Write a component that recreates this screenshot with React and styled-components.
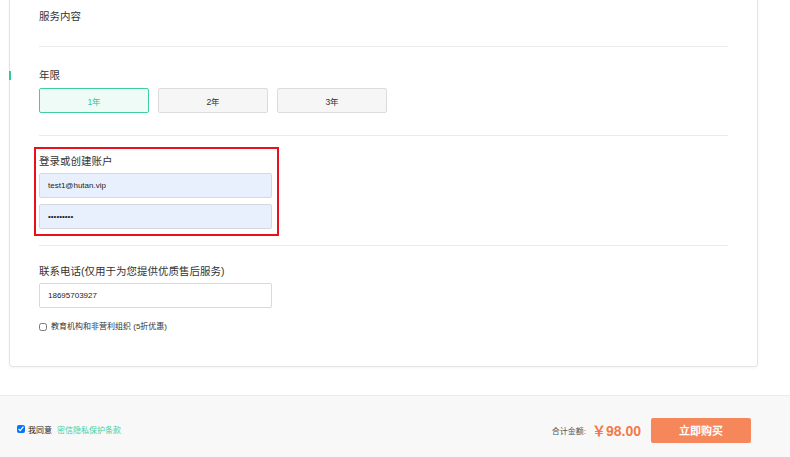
import React, { useState } from 'react'
import styled, { createGlobalStyle } from 'styled-components'

const GlobalStyle = createGlobalStyle`
  html, body {
    margin: 0;
    padding: 0;
    background: #fff;
  }
  body {
    font-family: "Liberation Sans", "Noto Sans CJK SC", sans-serif;
    color: #333;
    overflow: hidden;
  }
`

const years = ['1年', '2年', '3年']

function App() {
  const [year, setYear] = useState(0)
  const [agree, setAgree] = useState(true)
  const [edu, setEdu] = useState(false)

  return (
    <>
      <GlobalStyle />
      <Page>
        <Card>
          <Section pad="0 0 23px">
            <Label>服务内容</Label>
          </Section>

          <Section pad="21px 0 22px">
            <Label marked>年限</Label>
            <YearRow>
              {years.map((y, i) => (
                <YearButton key={y} active={i === year} onClick={() => setYear(i)}>
                  {y}
                </YearButton>
              ))}
            </YearRow>
          </Section>

          <Section pad="11px 0 9px">
            <Highlight>
              <Label>登录或创建账户</Label>
              <Input autofill space="5px" defaultValue="test1@hutan.vip" />
              <Input autofill space="6px" type="password" defaultValue="123456789" />
            </Highlight>
          </Section>

          <Section pad="18px 0 34px" last>
            <Label>联系电话(仅用于为您提供优质售后服务)</Label>
            <Input space="5px" defaultValue="18695703927" />
            <CheckRow>
              <Check type="checkbox" checked={edu} onChange={() => setEdu(!edu)} />
              教育机构和非营利组织 (5折优惠)
            </CheckRow>
          </Section>
        </Card>
      </Page>

      <Footer>
        <Agree>
          <Check type="checkbox" checked={agree} onChange={() => setAgree(!agree)} />
          我同意
          <Link>密信隐私保护条款</Link>
        </Agree>
        <Total>
          合计金额:
          <Price>￥98.00</Price>
          <BuyButton>立即购买</BuyButton>
        </Total>
      </Footer>
    </>
  )
}

export default App

const Page = styled.div`
  padding: 0 32px 0 9px;
`

const Card = styled.div`
  background: #fff;
  border: 1px solid #e4e4e4;
  border-top: none;
  border-radius: 0 0 4px 4px;
  box-shadow: 0 1px 3px rgba(0, 0, 0, 0.05);
  padding: 9px 29px 0 29px;
`

const Section = styled.div`
  display: flex;
  flex-direction: column;
  align-items: flex-start;
  padding: ${p => p.pad};
  border-bottom: ${p => (p.last ? 'none' : '1px solid #ebebeb')};
`

const Label = styled.div`
  position: relative;
  font-size: 10.5px;
  line-height: 14px;
  color: #333;

  &::before {
    content: '';
    display: ${p => (p.marked ? 'block' : 'none')};
    position: absolute;
    left: -30px;
    top: 3px;
    width: 2px;
    height: 9px;
    background: #2ecb97;
  }
`

const YearRow = styled.div`
  display: flex;
  gap: 9px;
  margin-top: 6px;
`

const YearButton = styled.button`
  width: 110px;
  height: 25px;
  padding: 0;
  border: 1px solid ${p => (p.active ? '#3fcf9f' : '#dcdcdc')};
  background: ${p => (p.active ? '#effbf7' : '#f6f6f6')};
  color: ${p => (p.active ? '#3cc596' : '#333')};
  border-radius: 2px;
  font-family: inherit;
  font-size: 8.5px;
  cursor: pointer;
`

const Highlight = styled.div`
  display: flex;
  flex-direction: column;
  margin-left: -5px;
  padding: 5px 5px 5px 3px;
  border: 2px solid #e8101c;
`

const Input = styled.input`
  box-sizing: border-box;
  width: 233px;
  height: 25px;
  margin-top: ${p => p.space};
  padding: 0 8px;
  border: 1px solid ${p => (p.autofill ? '#d5d9de' : '#d9d9d9')};
  border-radius: 2px;
  background: ${p => (p.autofill ? '#e8f0fe' : '#fff')};
  color: #222;
  font-family: "Liberation Sans", sans-serif;
  font-size: 8px;
  outline: none;
`

const CheckRow = styled.label`
  display: flex;
  align-items: center;
  gap: 2px;
  margin-top: 14px;
  font-size: 8px;
  line-height: 10px;
  color: #333;
`

const Check = styled.input`
  width: 8px;
  height: 8px;
  margin: 0 2px 0 0;
`

const Footer = styled.div`
  display: flex;
  align-items: center;
  justify-content: space-between;
  margin-top: 28px;
  height: 68px;
  padding: 0 39px 0 17px;
  background: #f8f8f8;
  border-top: 1px solid #ececec;
`

const Agree = styled.label`
  display: flex;
  align-items: center;
  font-size: 8px;
  color: #222;
  gap: 1px;
  margin-top: -2px;
`

const Link = styled.a`
  color: #45cf9f;
  margin-left: 4px;
  cursor: pointer;
`

const Total = styled.div`
  display: flex;
  align-items: center;
  font-size: 8px;
  color: #555;
`

const Price = styled.span`
  margin: 0 10px 0 6px;
  font-size: 14px;
  font-weight: bold;
  color: #f4784b;
`

const BuyButton = styled.button`
  width: 100px;
  height: 25px;
  border: none;
  border-radius: 2px;
  background: #f6875a;
  color: #fff;
  font-family: inherit;
  font-size: 11px;
  font-weight: bold;
  cursor: pointer;
`
